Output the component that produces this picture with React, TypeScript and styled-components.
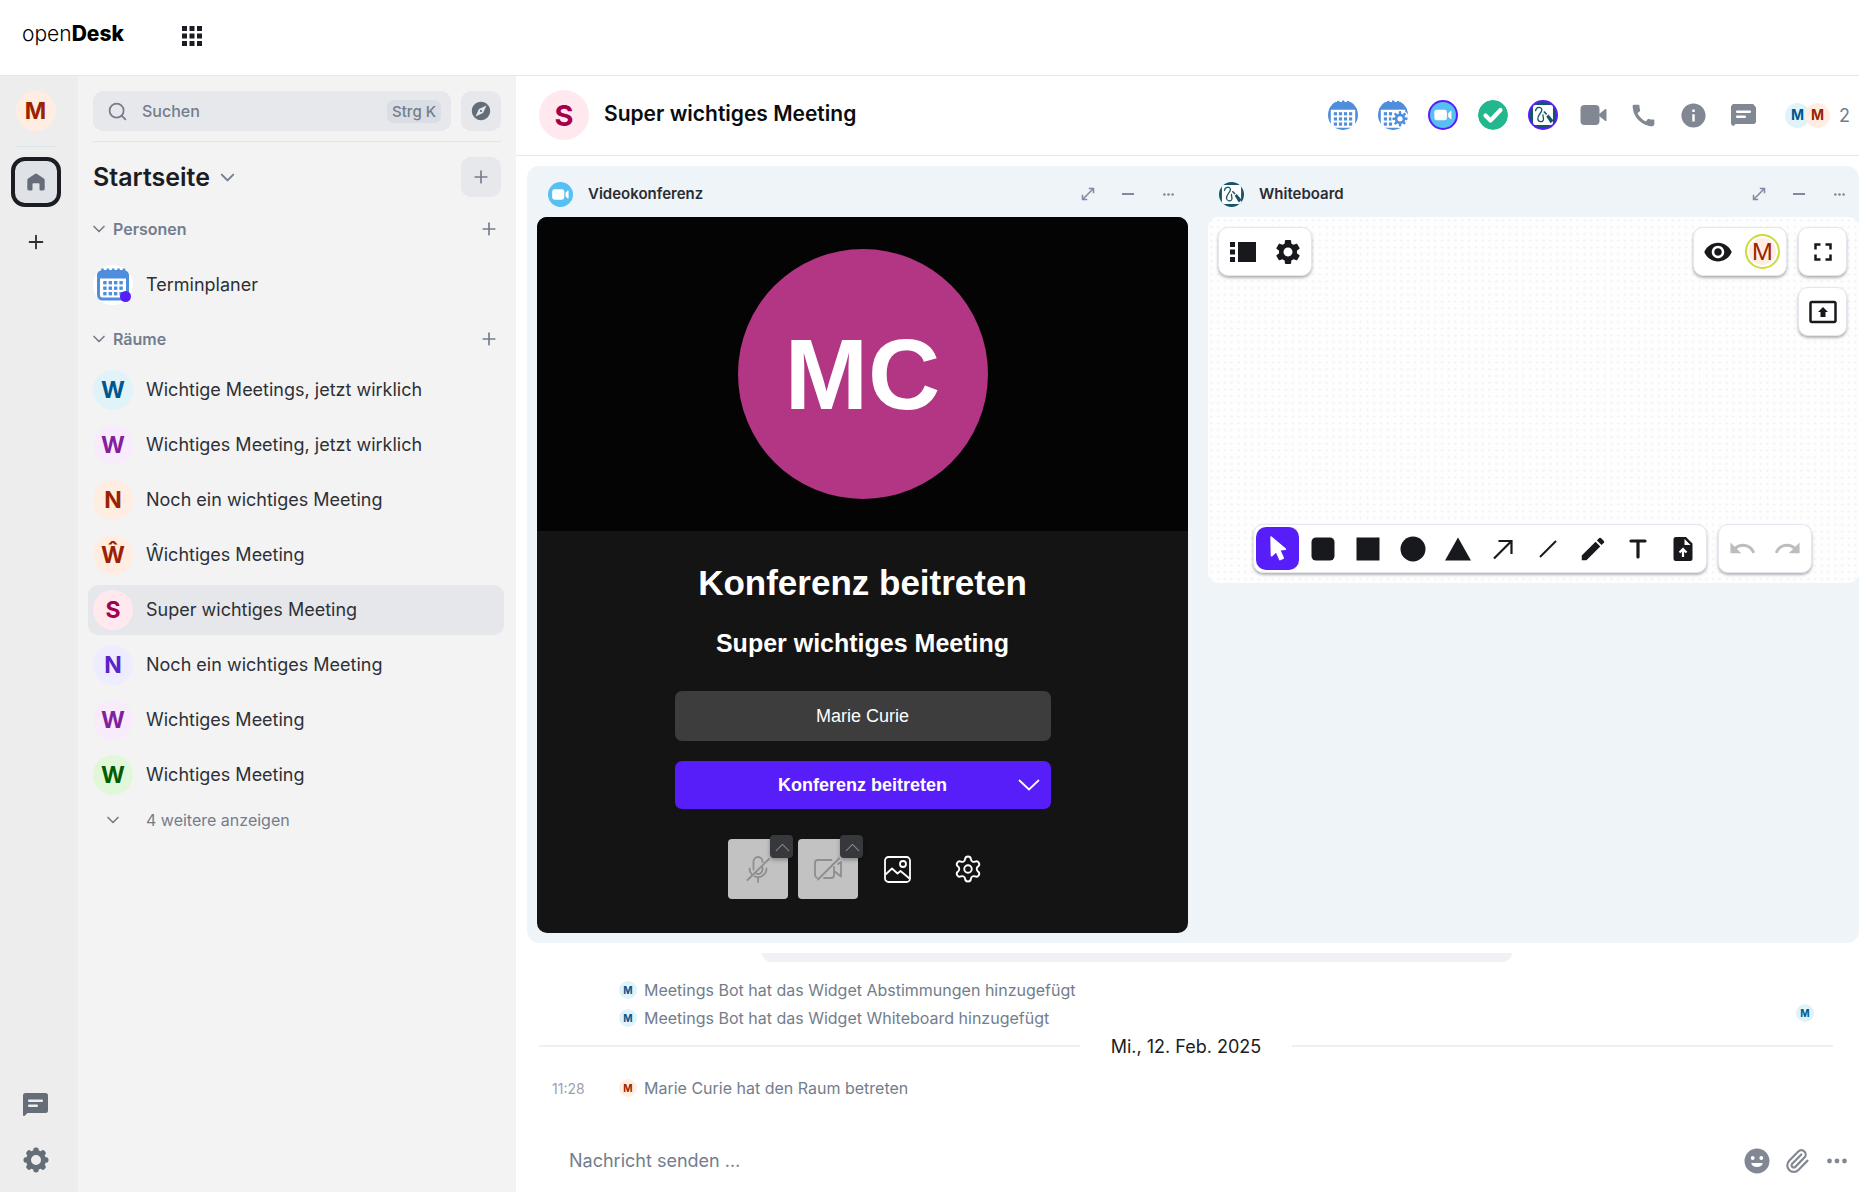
import React from "react";
import styled, { createGlobalStyle } from "styled-components";
import {
  MdCall,
  MdEdit,
  MdExplore,
  MdFullscreen,
  MdInfo,
  MdPresentToAll,
  MdRedo,
  MdSettings,
  MdUndo,
  MdVisibility,
} from "react-icons/md";
import { ChevronDown, ChevronUp, Paperclip, Plus, Search, Settings } from "lucide-react";

const GlobalStyle = createGlobalStyle`
  *, *::before, *::after { box-sizing: border-box; }
  body {
    margin: 0;
    background: #ffffff;
    color: #1b1d22;
    font-family: Inter, "Liberation Sans", sans-serif;
    font-size: 16px;
  }
  button, input { font-family: inherit; color: inherit; }
  button { border: 0; padding: 0; background: none; cursor: pointer; }
  h1, h2, h3, p, ul { margin: 0; padding: 0; }
  ul { list-style: none; }
  svg { display: block; flex: none; }
`;

/* ---------- palette ---------- */

type Tone = "blue" | "purple" | "orange" | "pink" | "violet" | "green";

const tones: Record<Tone, { bg: string; fg: string }> = {
  blue: { bg: "#e0f3f8", fg: "#00568f" },
  purple: { bg: "#f8ecfc", fg: "#831f9c" },
  orange: { bg: "#ffede2", fg: "#9b2200" },
  pink: { bg: "#ffe9ee", fg: "#a5004e" },
  violet: { bg: "#eeecff", fg: "#5a22c9" },
  green: { bg: "#e0f8d9", fg: "#005f00" },
};

/* ---------- frame ---------- */

const Page = styled.div`
  display: flex;
  flex-direction: column;
  min-height: 100vh;
`;

const TopBar = styled.header`
  display: flex;
  align-items: center;
  gap: 58px;
  height: 76px;
  padding: 0 22px 4px;
  border-bottom: 1px solid #e7e8ea;
`;

const Logo = styled.a`
  padding-bottom: 4px;
  color: #000000;
  font-size: 21px;
  font-weight: 300;
  line-height: 24px;
  text-decoration: none;

  b { font-weight: 800; }
`;

const Body = styled.div`
  display: flex;
  flex: 1;
`;

const Rail = styled.nav`
  display: flex;
  flex-direction: column;
  align-items: center;
  flex: none;
  width: 78px;
  padding: 15px 7px 12px 0;
  background: #ededed;
`;

const RailLine = styled.hr`
  width: 40px;
  margin: 15px 0 10px;
  border: 0;
  border-top: 1px solid #dbe3ea;
`;

const RailHome = styled.button`
  display: grid;
  place-items: center;
  width: 50px;
  height: 50px;
  border: 4px solid #1b1d22;
  border-radius: 14px;
  background: #dfe2e6;
  color: #656e78;
`;

const RailButton = styled.button`
  display: grid;
  place-items: center;
  width: 40px;
  height: 40px;
  color: #656e78;
`;

const RailAdd = styled(RailButton)`
  margin-top: 15px;
  color: #2e2f32;
`;

const RailFoot = styled.div`
  display: flex;
  flex-direction: column;
  gap: 16px;
  margin-top: auto;
`;

const Avatar = styled.span<{ $tone: Tone; $size: number; $font: number }>`
  display: inline-flex;
  align-items: center;
  justify-content: center;
  flex: none;
  width: ${(p) => p.$size}px;
  height: ${(p) => p.$size}px;
  border-radius: 50%;
  background: ${(p) => tones[p.$tone].bg};
  color: ${(p) => tones[p.$tone].fg};
  font-size: ${(p) => p.$font}px;
  font-weight: 700;
  line-height: 1;
`;

/* ---------- room list ---------- */

const SidePanel = styled.aside`
  flex: none;
  width: 438px;
  padding: 15px 12px 0 10px;
  background: #f3f3f3;
`;

const SearchRow = styled.div`
  display: flex;
  gap: 10px;
  margin: 0 3px 0 5px;
  padding-bottom: 10px;
  border-bottom: 1px solid #dfe5ee;
`;

const SearchButton = styled.button`
  display: flex;
  align-items: center;
  flex: 1;
  height: 40px;
  padding: 0 10px 0 14px;
  border-radius: 10px;
  background: #e6e8ec;
  color: #737d8c;
  font-size: 16px;
  font-weight: 500;
  line-height: 20px;

  span { margin: 0 auto 0 14px; }
`;

const Kbd = styled.kbd`
  padding: 0 5px;
  border-radius: 7px;
  background: #dadde3;
  font-family: inherit;
  font-size: 15px;
  font-weight: 500;
  line-height: 23px;
`;

const SquareButton = styled.button`
  display: grid;
  place-items: center;
  flex: none;
  width: 40px;
  height: 40px;
  border-radius: 10px;
  background: #e6e8ec;
  color: #737d8c;
`;

const SpaceRow = styled.div`
  display: flex;
  align-items: center;
  gap: 6px;
  margin: 15px 3px 0 5px;

  ${SquareButton} { margin-left: auto; }
`;

const SpaceTitle = styled.h2`
  font-size: 25px;
  font-weight: 600;
  line-height: 30px;
`;

const SectionHead = styled.div<{ $above: number; $below: number }>`
  display: flex;
  align-items: center;
  gap: 4px;
  margin: ${(p) => p.$above}px 5px ${(p) => p.$below}px 1px;
  color: #737d8c;

  h3 {
    flex: 1;
    font-size: 16px;
    font-weight: 600;
    line-height: 24px;
  }
`;

const SectionAdd = styled.button`
  display: grid;
  place-items: center;
  width: 20px;
  height: 20px;
`;

const RoomList = styled.ul`
  display: flex;
  flex-direction: column;
  gap: 5px;
`;

const RoomButton = styled.button<{ $active?: boolean }>`
  display: flex;
  align-items: center;
  gap: 13px;
  width: 100%;
  height: 50px;
  padding: 0 5px;
  border-radius: 10px;
  background: ${(p) => (p.$active ? "#e6e7eb" : "transparent")};
  color: #2e3036;
  font-size: 18px;
  line-height: 24px;
  text-align: left;
`;

const IconAvatar = styled.span`
  position: relative;
  width: 40px;
  height: 40px;
  border-radius: 50%;
  background: #ffffff;
`;

const Presence = styled.i`
  position: absolute;
  right: 2px;
  bottom: 3px;
  width: 11px;
  height: 11px;
  border-radius: 50%;
  background: #571efa;
`;

const MoreButton = styled.button`
  display: flex;
  align-items: center;
  gap: 23px;
  margin-top: 8px;
  padding-left: 15px;
  color: #737d8c;
  font-size: 16px;
  line-height: 24px;
`;

/* ---------- room ---------- */

const Main = styled.main`
  display: flex;
  flex-direction: column;
  flex: 1;
  min-width: 0;
`;

const RoomHeader = styled.header`
  display: flex;
  align-items: center;
  height: 80px;
  padding: 0 9px 1px 23px;
  border-bottom: 1px solid #e3e8f0;
`;

const RoomTitle = styled.h1`
  flex: 1;
  margin-left: 15px;
  padding-bottom: 2px;
  color: #0b0c0e;
  font-size: 21px;
  font-weight: 600;
  line-height: 30px;
`;

const HeaderActions = styled.div`
  display: flex;
  gap: 20px;
  margin-right: 27px;
`;

const HeaderButton = styled.button`
  display: grid;
  place-items: center;
  width: 30px;
  height: 30px;
  border-radius: 50%;
  overflow: hidden;
  color: #818893;
`;

const RingButton = styled(HeaderButton)`
  background: #571efa;
`;

const Facepile = styled.button`
  display: flex;
  align-items: center;
  color: #737d8c;
  font-size: 18px;

  ${Avatar} + ${Avatar} { margin-left: -5px; }
  span:last-child { margin-left: 9px; }
`;

const WidgetArea = styled.section`
  display: flex;
  gap: 20px;
  margin: 10px 0 0 11px;
  padding: 0 0 10px 10px;
  border-radius: 12px;
  background: #eff4f8;
`;

const Widget = styled.article`
  flex: 1;
  min-width: 0;
`;

const WidgetBar = styled.div`
  display: flex;
  align-items: center;
  height: 51px;
  padding: 5px 10px 0 11px;

  h2 {
    flex: 1;
    margin-left: 15px;
    color: #2a2c31;
    font-size: 15px;
    font-weight: 600;
    line-height: 20px;
  }
`;

const WidgetActions = styled.div`
  display: flex;
  gap: 20px;
`;

const TinyButton = styled.button`
  display: grid;
  place-items: center;
  width: 20px;
  height: 20px;
  color: #7f89a3;
`;

/* ---------- video conference ---------- */

const Conference = styled.div`
  overflow: hidden;
  border-radius: 10px;
  background: #141414;
  color: #ffffff;
  font-family: "Liberation Sans", Arial, sans-serif;
`;

const Preview = styled.div`
  display: grid;
  place-items: center;
  height: 314px;
  background: #040404;
`;

const PreviewFace = styled.div`
  display: grid;
  place-items: center;
  width: 250px;
  height: 250px;
  border-radius: 50%;
  background: #b23683;
  font-size: 100px;
  font-weight: 700;
  line-height: 1;
`;

const JoinForm = styled.form`
  display: flex;
  flex-direction: column;
  align-items: center;
  width: 376px;
  max-width: 100%;
  margin: 0 auto;
  padding: 30px 0 34px;
`;

const JoinTitle = styled.h3`
  font-size: 35px;
  line-height: 44px;
  white-space: nowrap;
`;

const JoinRoom = styled.p`
  margin: 23px 0 33px;
  font-size: 25px;
  font-weight: 700;
  line-height: 30px;
  white-space: nowrap;
`;

const NameInput = styled.input`
  width: 100%;
  height: 50px;
  border: 0;
  border-radius: 7px;
  background: #3d3d3d;
  color: #ffffff;
  font-size: 18px;
  text-align: center;
`;

const JoinButton = styled.button`
  display: grid;
  grid-template-columns: 44px 1fr 44px;
  align-items: center;
  justify-items: center;
  width: 100%;
  height: 48px;
  margin: 20px 0 30px;
  border-radius: 7px;
  background: #571efa;
  color: #ffffff;
  font-size: 18px;
  font-weight: 700;

  span { grid-column: 2; }
`;

const DeviceRow = styled.div`
  display: flex;
  gap: 10px;
`;

const DeviceButton = styled.button<{ $muted?: boolean }>`
  position: relative;
  display: grid;
  place-items: center;
  width: 60px;
  height: 60px;
  border-radius: 4px;
  background: ${(p) => (p.$muted ? "#c2c2c2" : "transparent")};
  color: ${(p) => (p.$muted ? "#8e8e8e" : "#ffffff")};
`;

const DeviceMenu = styled.i`
  position: absolute;
  top: -4px;
  right: -5px;
  display: grid;
  place-items: center;
  width: 23px;
  height: 23px;
  border-radius: 4px;
  background: #36383c;
  box-shadow: 0 2px 4px rgba(0, 0, 0, 0.3);
  color: #85878b;
`;

/* ---------- whiteboard ---------- */

const Board = styled.div`
  display: flex;
  flex-direction: column;
  justify-content: space-between;
  aspect-ratio: 16 / 9;
  padding: 10px 12px 10px 10px;
  border-radius: 10px;
  background-color: #fefefe;
  background-image: radial-gradient(circle, #f3f3f3 1px, transparent 1px);
  background-size: calc(100% / 96) calc(100% / 54);
`;

const BoardRow = styled.div<{ $center?: boolean }>`
  display: flex;
  align-items: flex-start;
  justify-content: ${(p) => (p.$center ? "center" : "flex-start")};
  gap: 11px;
`;

const BoardStack = styled.div`
  display: flex;
  flex-direction: column;
  gap: 11px;
`;

const Tools = styled.div<{ $push?: boolean }>`
  display: flex;
  gap: 2px;
  margin-left: ${(p) => (p.$push ? "auto" : "0")};
  padding: 2px;
  border: 1px solid #e3e8f0;
  border-radius: 10px;
  background: #ffffff;
  box-shadow: 0 2px 3px rgba(0, 0, 0, 0.3);
`;

const Tool = styled.button<{ $on?: boolean; $off?: boolean }>`
  display: grid;
  place-items: center;
  width: 43px;
  height: 43px;
  border-radius: 10px;
  background: ${(p) => (p.$on ? "#571efa" : "transparent")};
  color: ${(p) => (p.$on ? "#ffffff" : p.$off ? "#bdbdbd" : "#17191c")};
`;

const BoardFace = styled.span`
  display: grid;
  place-items: center;
  width: 35px;
  height: 35px;
  border: 2px solid #cddc39;
  border-radius: 50%;
  background: #ffede2;
  box-shadow: inset 0 0 0 2px #ffffff;
  color: #9b2200;
  font-size: 23px;
`;

/* ---------- timeline ---------- */

const Timeline = styled.section`
  flex: 1;
  padding: 10px 0 0;
`;

const TileEnd = styled.div`
  width: 750px;
  max-width: 70%;
  height: 9px;
  margin: 0 0 14px 246px;
  border-radius: 0 0 10px 10px;
  background: #eff1f5;
`;

const EventRow = styled.div<{ $first?: boolean }>`
  display: flex;
  align-items: center;
  height: 28px;
  margin-top: ${(p) => (p.$first ? 14 : 0)}px;
  padding: 0 45px 0 36px;
  color: #737d8c;
  font-size: 16px;

  time {
    width: 67px;
    color: #9aa2ae;
    font-size: 14px;
  }
  p { margin-left: 7px; }
`;

const Receipt = styled.span`
  display: flex;
  align-self: flex-start;
  margin-left: auto;
`;

const DateRow = styled.div`
  display: flex;
  align-items: center;
  gap: 31px;
  height: 28px;
  padding: 0 26px 0 23px;
  font-size: 18px;

  &::before,
  &::after {
    content: "";
    flex: 1;
    border-top: 2px solid #eceff3;
  }
`;

const Composer = styled.form`
  display: flex;
  align-items: center;
  gap: 10px;
  height: 63px;
  padding: 0 7px 0 53px;
`;

const MessageInput = styled.input`
  flex: 1;
  min-width: 0;
  padding: 0;
  border: 0;
  outline: 0;
  background: transparent;
  font-size: 18px;

  &::placeholder { color: #737d8c; opacity: 1; }
`;

const ComposerButton = styled.button`
  display: grid;
  place-items: center;
  width: 30px;
  height: 30px;
  color: #818893;
`;

/* ---------- drawings ---------- */

const EIGHT_WAYS = [0, 45, 90, 135, 180, 225, 270, 315];

const GridIcon = () => (
  <svg width="20" height="20" viewBox="0 0 20 20" fill="#1b1d22">
    {[0, 7.5, 15].map((y) => [0, 7.5, 15].map((x) => <rect key={`${x}-${y}`} x={x} y={y} width="5" height="5" />))}
  </svg>
);

const HomeIcon = () => (
  <svg width="20" height="20" viewBox="0 0 20 20" fill="currentColor">
    <path d="M8.900 1.900a1.800 1.800 0 0 1 2.200 0l6.700 4.600a2 2 0 0 1 .9 1.700v8.500a1.700 1.700 0 0 1-1.700 1.700h-2.300a1.200 1.200 0 0 1-1.200-1.200v-5a1 1 0 0 0-1-1H7.500a1 1 0 0 0-1 1v5a1.200 1.200 0 0 1-1.200 1.200H3a1.700 1.700 0 0 1-1.700-1.700V8.200a2 2 0 0 1 .9-1.700z" />
  </svg>
);

const ChatIcon = ({ size = 25, line = "#ffffff" }: { size?: number; line?: string }) => (
  <svg width={size} height={size} viewBox="0 0 25 25">
    <path
      d="M2.500 1h20A2.500 2.500 0 0 1 25 3.500v15a2.500 2.500 0 0 1-2.500 2.500H4.500L1.700 23.800A1 1 0 0 1 0 23.100V3.500A2.500 2.500 0 0 1 2.500 1z"
      fill="currentColor"
    />
    <path d="M6.200 8.700h12.600M6.200 13.700h7.600" stroke={line} strokeWidth="2.500" strokeLinecap="round" />
  </svg>
);

const GearIcon = () => (
  <svg width="26" height="26" viewBox="0 0 26 26" fill="currentColor">
    <circle cx="13" cy="13" r="7.500" fill="none" stroke="currentColor" strokeWidth="5" />
    {EIGHT_WAYS.map((a) => (
      <rect key={a} x="10.200" y="0.500" width="5.600" height="5" rx="2.400" transform={`rotate(${a} 13 13)`} />
    ))}
  </svg>
);

const CalendarIcon = ({ size, viewBox, gear }: { size: number; viewBox: string; gear?: boolean }) => (
  <svg width={size} height={size} viewBox={viewBox}>
    <rect x="5.500" y="6.500" width="29" height="27.500" rx="4" fill="#ffffff" stroke="#4f8edc" strokeWidth="3" />
    <path d="M4 13.500V10a5 5 0 0 1 5-3h22a5 5 0 0 1 5 3v3.500z" fill="#4f8edc" />
    <path d="M9.500 3.500v4M14.900 3.500v4M20.200 3.500v4M25.500 3.500v4M31 3.500v4" stroke="#4f8edc" strokeWidth="2.600" />
    {[16, 21.5, 27].map((y) =>
      [10.2, 15.6, 21, 26.4].map((x) =>
        gear && x > 18 ? null : <rect key={`${x}-${y}`} x={x} y={y} width="3.400" height="3.400" fill="#4f8edc" />
      )
    )}
    {gear && (
      <g>
        <circle cx="27.500" cy="23" r="9.500" fill="#ffffff" />
        <circle cx="27.500" cy="23" r="4.200" fill="none" stroke="#4f8edc" strokeWidth="2.800" />
        {EIGHT_WAYS.map((a) => (
          <rect key={a} x="26.200" y="14.800" width="2.600" height="4" rx="1" fill="#4f8edc" transform={`rotate(${a} 27.500 23)`} />
        ))}
      </g>
    )}
  </svg>
);

const MeetIcon = ({ size }: { size: number }) => (
  <svg width={size} height={size} viewBox="0 0 30 30">
    <circle cx="15" cy="15" r="15" fill="#57bff3" />
    <rect x="5" y="8.800" width="14.500" height="12.400" rx="2.800" fill="#ffffff" />
    <path d="M21 12.900l2.700-2.600c.4-.4 1-.1 1 .5v8.400c0 .6-.6.900-1 .5L21 17.100z" fill="#ffffff" />
  </svg>
);

const PollIcon = () => (
  <svg width="30" height="30" viewBox="0 0 30 30">
    <circle cx="15" cy="15" r="15" fill="#22b78c" />
    <path d="M7.500 15.500l5 5 10-10.500" fill="none" stroke="#ffffff" strokeWidth="4.200" strokeLinecap="round" strokeLinejoin="round" />
  </svg>
);

const BoardIcon = ({ size }: { size: number }) => (
  <svg width={size} height={size} viewBox="0 0 30 30">
    <circle cx="15" cy="15" r="15" fill="#175468" />
    <rect x="3.500" y="3.500" width="23" height="23" rx="2.500" fill="#ffffff" />
    <path
      d="M6.500 10c.5-4.500 7-5 7.200-1 .2 3.200-5.200 6-4.700 10.500.4 3.800 5.400 4.200 6.400 1.200.7-2.300-.8-3.900-.4-5.900"
      fill="none"
      stroke="#175468"
      strokeWidth="1.500"
      strokeLinecap="round"
    />
    <path d="M16 11l3.200 3.300" stroke="#175468" strokeWidth="1.800" />
    <path d="M18.800 16.600l2.400-2.200 6 7-3.400 3.200z" fill="#175468" />
  </svg>
);

const VideoIcon = () => (
  <svg width="28" height="28" viewBox="0 0 28 28" fill="currentColor">
    <path d="M5.500 4h11A4 4 0 0 1 20.500 8v12a4 4 0 0 1-4 4h-11a4 4 0 0 1-4-4V8a4 4 0 0 1 4-4z" />
    <path d="M19 14l7-5.800c.7-.6 1.500-.2 1.500.6v10.400c0 .8-.8 1.200-1.500.6z" />
  </svg>
);

const ExpandIcon = () => (
  <svg width="14" height="14" viewBox="0 0 14 14" fill="none" stroke="currentColor" strokeWidth="1.500">
    <path d="M1.800 12.200L12.200 1.800M7.800 1.500h4.700v4.700M1.500 7.800v4.700h4.700" />
  </svg>
);

const MinusIcon = () => (
  <svg width="12" height="12" viewBox="0 0 12 12" stroke="currentColor" strokeWidth="2">
    <path d="M0 6h12" />
  </svg>
);

const DotsIcon = ({ size }: { size: number }) => (
  <svg width={size} height={size} viewBox="0 0 20 20" fill="currentColor">
    <circle cx="2.500" cy="10" r="2.400" />
    <circle cx="10" cy="10" r="2.400" />
    <circle cx="17.500" cy="10" r="2.400" />
  </svg>
);

const MicOffIcon = () => (
  <svg width="28" height="28" viewBox="0 0 28 28" fill="none" stroke="currentColor" strokeWidth="1.800" strokeLinecap="round">
    <path d="M9.500 14.500V6.500a4.500 4.500 0 0 1 9 0V7M18.500 12.500v2a4.500 4.500 0 0 1-6 4.200M5.500 13.500a8.500 8.500 0 0 0 2 5.500M22.500 13.500a8.500 8.500 0 0 1-12 7.800M14 22.500V27M3.500 25L25 4" />
  </svg>
);

const CameraOffIcon = () => (
  <svg
    width="28"
    height="28"
    viewBox="0 0 28 28"
    fill="none"
    stroke="currentColor"
    strokeWidth="1.800"
    strokeLinecap="round"
    strokeLinejoin="round"
  >
    <path d="M17.500 5H4a3 3 0 0 0-3 3v12a3 3 0 0 0 2 2.800M10 23h7a3 3 0 0 0 3-3v-8M20 16l7 5.500V7l-3 2M4 24.500L25 3.500" />
  </svg>
);

const PictureIcon = () => (
  <svg width="27" height="27" viewBox="0 0 27 27" fill="none" stroke="currentColor" strokeWidth="1.800" strokeLinejoin="round">
    <rect x="1" y="1" width="25" height="25" rx="3.500" />
    <circle cx="19" cy="8" r="3" />
    <path d="M1.500 18.500L8 12.500l5.500 5 3-2.500 9 7.500" />
  </svg>
);

const WideChevron = () => (
  <svg width="22" height="12" viewBox="0 0 22 12" fill="none" stroke="currentColor" strokeWidth="1.800" strokeLinecap="round">
    <path d="M1.500 1.500L11 10.500l9.500-9" />
  </svg>
);

const SlidesIcon = () => (
  <svg width="26" height="20" viewBox="0 0 26 20" fill="currentColor">
    <path d="M0 0h5v5H0zM0 7.500h5v5H0zM0 15h5v5H0zM8 0h18v20H8z" />
  </svg>
);

const PointerIcon = () => (
  <svg width="20" height="26" viewBox="0 0 20 26" fill="currentColor">
    <path d="M2.300.9a.8.800 0 0 1 1.300-.5l14.300 12.200c.6.500.2 1.400-.5 1.500l-4.700.5 3.200 7a1 1 0 0 1-.5 1.300l-3 1.400a1 1 0 0 1-1.300-.5l-3.100-7-3.900 3.600c-.6.500-1.400.1-1.400-.6z" />
  </svg>
);

type ShapeKind = "rounded" | "square" | "circle" | "triangle" | "arrow" | "line" | "text" | "upload";

const ShapeIcon = ({ kind }: { kind: ShapeKind }) => (
  <svg width="26" height="26" viewBox="0 0 26 26" fill="currentColor">
    {kind === "rounded" && <rect x="1.500" y="1.500" width="23" height="23" rx="4.500" />}
    {kind === "square" && <rect x="1.500" y="1.500" width="23" height="23" />}
    {kind === "circle" && <circle cx="13" cy="13" r="12.500" />}
    {kind === "triangle" && <path d="M13 1.500L26 24.500H0z" />}
    {kind === "arrow" && (
      <path d="M4 22.500L21 5.500M8.500 5H21.500V18" fill="none" stroke="currentColor" strokeWidth="2.200" />
    )}
    {kind === "line" && <path d="M5 21L21 5" stroke="currentColor" strokeWidth="2" />}
    {kind === "text" && <path d="M6 5h14M13 5v16" stroke="currentColor" strokeWidth="3.200" strokeLinecap="round" />}
    {kind === "upload" && (
      <g>
        <path d="M5.500 1h10.500L22.500 7.500V22.500A2.500 2.500 0 0 1 20 25H6a2.500 2.500 0 0 1-2.500-2.500V3.500A2.500 2.500 0 0 1 6 1z" />
        <path d="M14.500 3v6h6z" fill="#ffffff" />
        <path d="M13 21v-7M9.500 16.500L13 13l3.500 3.500" fill="none" stroke="#ffffff" strokeWidth="2.200" />
      </g>
    )}
  </svg>
);

const SmileIcon = () => (
  <svg width="26" height="26" viewBox="0 0 26 26">
    <circle cx="13" cy="13" r="12.500" fill="currentColor" />
    <circle cx="8.700" cy="10" r="1.900" fill="#ffffff" />
    <circle cx="17.300" cy="10" r="1.900" fill="#ffffff" />
    <path d="M7.200 15h11.600a5.900 5 0 0 1-11.600 0z" fill="#ffffff" />
  </svg>
);

/* ---------- content ---------- */

const rooms: { name: string; tone: Tone; active?: boolean }[] = [
  { name: "Wichtige Meetings, jetzt wirklich", tone: "blue" },
  { name: "Wichtiges Meeting, jetzt wirklich", tone: "purple" },
  { name: "Noch ein wichtiges Meeting", tone: "orange" },
  { name: "Ŵichtiges Meeting", tone: "orange" },
  { name: "Super wichtiges Meeting", tone: "pink", active: true },
  { name: "Noch ein wichtiges Meeting", tone: "violet" },
  { name: "Wichtiges Meeting", tone: "purple" },
  { name: "Wichtiges Meeting", tone: "green" },
];

const Section = ({ title, above, below }: { title: string; above: number; below: number }) => (
  <SectionHead $above={above} $below={below}>
    <ChevronDown size={20} strokeWidth={2} />
    <h3>{title}</h3>
    <SectionAdd aria-label={`${title} hinzufügen`}>
      <Plus size={20} strokeWidth={2} />
    </SectionAdd>
  </SectionHead>
);

const WidgetHead = ({ title, icon }: { title: string; icon: React.ReactNode }) => (
  <WidgetBar>
    {icon}
    <h2>{title}</h2>
    <WidgetActions>
      <TinyButton aria-label="Maximieren"><ExpandIcon /></TinyButton>
      <TinyButton aria-label="Minimieren"><MinusIcon /></TinyButton>
      <TinyButton aria-label="Optionen"><DotsIcon size={11} /></TinyButton>
    </WidgetActions>
  </WidgetBar>
);

export default function App() {
  return (
    <Page>
      <GlobalStyle />
      <TopBar>
        <Logo href="#">open<b>Desk</b></Logo>
        <button aria-label="Anwendungen"><GridIcon /></button>
      </TopBar>

      <Body>
        <Rail>
          <Avatar $tone="orange" $size={40} $font={23}>M</Avatar>
          <RailLine />
          <RailHome aria-label="Startseite"><HomeIcon /></RailHome>
          <RailAdd aria-label="Space erstellen"><Plus size={22} strokeWidth={2} /></RailAdd>
          <RailFoot>
            <RailButton aria-label="Threads"><ChatIcon line="#ededed" /></RailButton>
            <RailButton aria-label="Einstellungen"><GearIcon /></RailButton>
          </RailFoot>
        </Rail>

        <SidePanel>
          <SearchRow>
            <SearchButton>
              <Search size={21} strokeWidth={2} />
              <span>Suchen</span>
              <Kbd>Strg K</Kbd>
            </SearchButton>
            <SquareButton aria-label="Räume erkunden"><MdExplore size={22} color="#656e78" /></SquareButton>
          </SearchRow>
          <SpaceRow>
            <SpaceTitle>Startseite</SpaceTitle>
            <ChevronDown size={23} color="#737d8c" strokeWidth={2} />
            <SquareButton aria-label="Hinzufügen"><Plus size={20} strokeWidth={2} /></SquareButton>
          </SpaceRow>

          <Section title="Personen" above={20} below={19} />
          <RoomButton>
            <IconAvatar>
              <CalendarIcon size={40} viewBox="0 0 40 40" />
              <Presence />
            </IconAvatar>
            Terminplaner
          </RoomButton>

          <Section title="Räume" above={17} below={14} />
          <RoomList>
            {rooms.map((room, i) => (
              <li key={i}>
                <RoomButton $active={room.active}>
                  <Avatar $tone={room.tone} $size={40} $font={23}>{room.name[0]}</Avatar>
                  {room.name}
                </RoomButton>
              </li>
            ))}
          </RoomList>
          <MoreButton>
            <ChevronDown size={20} strokeWidth={2} />
            4 weitere anzeigen
          </MoreButton>
        </SidePanel>

        <Main>
          <RoomHeader>
            <Avatar $tone="pink" $size={50} $font={29}>S</Avatar>
            <RoomTitle>Super wichtiges Meeting</RoomTitle>
            <HeaderActions>
              <HeaderButton aria-label="Terminplaner"><CalendarIcon size={30} viewBox="4 3 32 32" /></HeaderButton>
              <HeaderButton aria-label="Termin verwalten"><CalendarIcon size={30} viewBox="4 3 32 32" gear /></HeaderButton>
              <RingButton aria-label="Videokonferenz"><MeetIcon size={26} /></RingButton>
              <HeaderButton aria-label="Abstimmungen"><PollIcon /></HeaderButton>
              <RingButton aria-label="Whiteboard"><BoardIcon size={26} /></RingButton>
              <HeaderButton aria-label="Videoanruf"><VideoIcon /></HeaderButton>
              <HeaderButton aria-label="Sprachanruf"><MdCall size={29} /></HeaderButton>
              <HeaderButton aria-label="Rauminfo"><MdInfo size={29} /></HeaderButton>
              <HeaderButton aria-label="Threads"><ChatIcon size={25} /></HeaderButton>
            </HeaderActions>
            <Facepile aria-label="2 Mitglieder">
              <Avatar $tone="blue" $size={25} $font={14}>M</Avatar>
              <Avatar $tone="orange" $size={25} $font={14}>M</Avatar>
              <span>2</span>
            </Facepile>
          </RoomHeader>

          <WidgetArea>
            <Widget>
              <WidgetHead title="Videokonferenz" icon={<MeetIcon size={25} />} />
              <Conference>
                <Preview><PreviewFace>MC</PreviewFace></Preview>
                <JoinForm onSubmit={(e) => e.preventDefault()}>
                  <JoinTitle>Konferenz beitreten</JoinTitle>
                  <JoinRoom>Super wichtiges Meeting</JoinRoom>
                  <NameInput aria-label="Name" defaultValue="Marie Curie" />
                  <JoinButton><span>Konferenz beitreten</span><WideChevron /></JoinButton>
                  <DeviceRow>
                    <DeviceButton type="button" $muted aria-label="Mikrofon">
                      <MicOffIcon />
                      <DeviceMenu><ChevronUp size={25} strokeWidth={1} /></DeviceMenu>
                    </DeviceButton>
                    <DeviceButton type="button" $muted aria-label="Kamera">
                      <CameraOffIcon />
                      <DeviceMenu><ChevronUp size={25} strokeWidth={1} /></DeviceMenu>
                    </DeviceButton>
                    <DeviceButton type="button" aria-label="Hintergrund"><PictureIcon /></DeviceButton>
                    <DeviceButton type="button" aria-label="Einstellungen"><Settings size={30} strokeWidth={1.5} /></DeviceButton>
                  </DeviceRow>
                </JoinForm>
              </Conference>
            </Widget>

            <Widget>
              <WidgetHead title="Whiteboard" icon={<BoardIcon size={25} />} />
              <Board>
                <BoardRow>
                  <Tools>
                    <Tool aria-label="Folien"><SlidesIcon /></Tool>
                    <Tool aria-label="Einstellungen"><MdSettings size={30} /></Tool>
                  </Tools>
                  <Tools $push>
                    <Tool aria-label="Ansicht"><MdVisibility size={30} /></Tool>
                    <Tool aria-label="Marie Curie"><BoardFace>M</BoardFace></Tool>
                  </Tools>
                  <BoardStack>
                    <Tools><Tool aria-label="Vollbild"><MdFullscreen size={30} /></Tool></Tools>
                    <Tools><Tool aria-label="Präsentieren"><MdPresentToAll size={30} /></Tool></Tools>
                  </BoardStack>
                </BoardRow>
                <BoardRow $center>
                  <Tools>
                    <Tool $on aria-label="Auswählen"><PointerIcon /></Tool>
                    <Tool aria-label="Abgerundetes Rechteck"><ShapeIcon kind="rounded" /></Tool>
                    <Tool aria-label="Rechteck"><ShapeIcon kind="square" /></Tool>
                    <Tool aria-label="Ellipse"><ShapeIcon kind="circle" /></Tool>
                    <Tool aria-label="Dreieck"><ShapeIcon kind="triangle" /></Tool>
                    <Tool aria-label="Pfeil"><ShapeIcon kind="arrow" /></Tool>
                    <Tool aria-label="Linie"><ShapeIcon kind="line" /></Tool>
                    <Tool aria-label="Stift"><MdEdit size={30} /></Tool>
                    <Tool aria-label="Text"><ShapeIcon kind="text" /></Tool>
                    <Tool aria-label="Hochladen"><ShapeIcon kind="upload" /></Tool>
                  </Tools>
                  <Tools>
                    <Tool $off aria-label="Rückgängig"><MdUndo size={29} /></Tool>
                    <Tool $off aria-label="Wiederholen"><MdRedo size={29} /></Tool>
                  </Tools>
                </BoardRow>
              </Board>
            </Widget>
          </WidgetArea>

          <Timeline>
            <TileEnd />
            <EventRow>
              <time />
              <Avatar $tone="blue" $size={18} $font={10}>M</Avatar>
              <p>Meetings Bot hat das Widget Abstimmungen hinzugefügt</p>
            </EventRow>
            <EventRow>
              <time />
              <Avatar $tone="blue" $size={18} $font={10}>M</Avatar>
              <p>Meetings Bot hat das Widget Whiteboard hinzugefügt</p>
              <Receipt><Avatar $tone="blue" $size={18} $font={10}>M</Avatar></Receipt>
            </EventRow>
            <DateRow>Mi., 12. Feb. 2025</DateRow>
            <EventRow $first>
              <time>11:28</time>
              <Avatar $tone="orange" $size={18} $font={10}>M</Avatar>
              <p>Marie Curie hat den Raum betreten</p>
            </EventRow>
          </Timeline>

          <Composer onSubmit={(e) => e.preventDefault()}>
            <MessageInput aria-label="Nachricht senden" placeholder="Nachricht senden …" />
            <ComposerButton type="button" aria-label="Emoji"><SmileIcon /></ComposerButton>
            <ComposerButton type="button" aria-label="Anhang"><Paperclip size={26} strokeWidth={2} /></ComposerButton>
            <ComposerButton type="button" aria-label="Mehr"><DotsIcon size={20} /></ComposerButton>
          </Composer>
        </Main>
      </Body>
    </Page>
  );
}
